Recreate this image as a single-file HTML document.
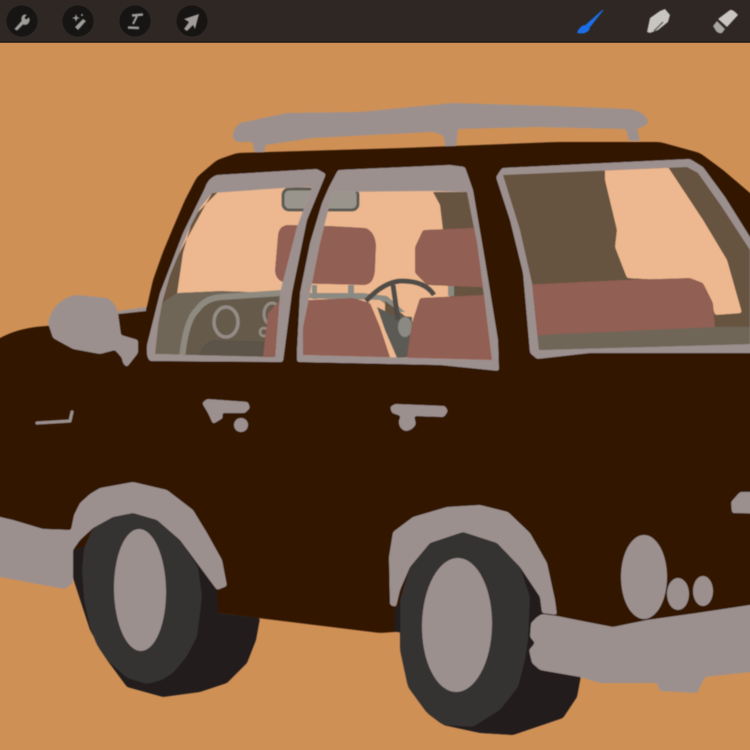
<!DOCTYPE html>
<html><head><meta charset="utf-8"><style>
html,body{margin:0;padding:0;background:#CF9056;width:750px;height:750px;overflow:hidden}
svg{display:block}
</style></head><body>
<svg width="750" height="750" viewBox="0 0 750 750" xmlns="http://www.w3.org/2000/svg">
<defs>
<filter id="s" filterUnits="userSpaceOnUse" x="-60" y="-60" width="870" height="870"><feGaussianBlur stdDeviation="0.6"/></filter>
<filter id="r" filterUnits="userSpaceOnUse" x="-60" y="-60" width="870" height="870" color-interpolation-filters="sRGB"><feGaussianBlur stdDeviation="2.6"/><feColorMatrix type="matrix" values="1 0 0 0 0 0 1 0 0 0 0 0 1 0 0 0 0 0 12 -5.5"/></filter>
<filter id="t" filterUnits="userSpaceOnUse" x="-60" y="-60" width="870" height="870" color-interpolation-filters="sRGB"><feGaussianBlur stdDeviation="1.3"/><feColorMatrix type="matrix" values="1 0 0 0 0 0 1 0 0 0 0 0 1 0 0 0 0 0 10 -4.5"/></filter>
<clipPath id="c1"><path d="M212,193 L283,188 L312,187 L297,227 L280,293 L275,357 L155,354 L158,325 L162,303 L170,275 L190,227 L200,208 Z"/></clipPath>
<clipPath id="c2"><path d="M333,192 L430,191 L467,192 L477,243 L485,303 L492,360 L303,355 L303,327 L310,293 L320,243 L330,203 Z"/></clipPath>
<clipPath id="c3"><path d="M503,175 L687,167 L698,173 L722,207 L750,250 L750,344 L539,350 L532,283 L520,230 Z"/></clipPath>
</defs>
<rect width="750" height="750" fill="#CF9056"/>
<g filter="url(#s)" stroke-linejoin="round">
<!-- rack -->
<path filter="url(#t)" fill="#9C908E" d="M233,133 Q236,126 240,123 L287,113 L360,112 L453,103 L553,106 L630,109 Q646,112 648,122 Q647,127 637,128 L640,141 L629,141 L626,129 L537,127 L458,129 L456,147 L445,147 L444,137 Q438,132 430,132 L313,138 L265,145 L265,152 L254,152 L253,142 L237,142 Q232,140 233,133 Z"/>
<!-- body -->
<path filter="url(#r)" fill="#331800" d="M-30,352 L0,338 Q20,327 48,326 L118,313 L146,311 L153,280 L163,252 L173,228 L185,200 L197,177 L217,160 L237,153 L403,148 L557,142 L660,142 L700,153 L723,170 L750,193 L780,220 L780,620 L555,630 L540,620 L394,632 L380,633 L218,613 L100,590 L60,565 L-30,550 Z"/>
<path fill="#9C908E" d="M118,311 L146,307 L146,311 L118,314 Z"/>
<!-- rear tyre dark -->
<path filter="url(#t)" fill="#211E1B" d="M73,550 L73,578 L90,630 L107,660 L127,687 L163,697 L200,692 L227,683 L247,663 L256,640 L260,618 L218,613 L217,590 L190,550 L133,530 Z"/>
<path filter="url(#r)" fill="#353130" d="M133,513 L113,517 L93,528 L84,548 L82,570 L84,600 L90,627 L97,645 L107,660 L127,678 L147,684 L162,680 L173,673 L187,656 L197,637 L202,597 L198,567 L180,540 L157,520 Z"/>
<ellipse cx="140" cy="590" rx="26" ry="61" fill="#9C908E" transform="rotate(-1 140 590)"/>
<path filter="url(#t)" fill="#9C908E" d="M-30,510 L0,517 L13,520 L43,529 L71,530 L74,515 L80,503 L90,494 L100,488 L133,482 L167,490 L193,510 L207,533 L222,560 L227,586 L217,590 L200,567 L180,540 L157,520 L133,513 L113,517 L93,528 L80,540 L73,550 L73,583 L65,589 L43,585 L0,577 L-30,570 Z"/>
<!-- front tyre -->
<path filter="url(#t)" fill="#211E1B" d="M395,607 L394,632 L400,632 L443,725 L480,733 L513,735 L563,718 L577,697 L582,670 L542,613 L540,597 L520,567 Z"/>
<path filter="url(#r)" fill="#353130" d="M463,532 L430,543 L410,567 L400,600 L400,650 L408,687 L427,713 L443,725 L473,727 L500,710 L518,687 L525,660 L528,640 L530,597 L520,567 L497,543 Z"/>
<ellipse cx="457" cy="625" rx="35" ry="67" fill="#9C908E" transform="rotate(1 457 625)"/>
<path filter="url(#t)" fill="#9C908E" d="M390,605 L389,557 L393,532 L413,517 L447,507 L480,505 L508,512 L530,533 L547,563 L555,600 L557,615 L542,613 L540,597 L520,567 L497,543 L463,532 L430,543 L410,567 L400,590 L396,607 Z"/>
<path filter="url(#t)" fill="#9C908E" d="M542,614 L537,617 L531,623 L530,637 L535,643 L529,650 L532,663 L540,670 L580,677 L600,683 L657,683 L660,691 L697,693 L705,677 L750,672 L780,670 L780,600 L750,605 L697,613 L647,620 L613,627 L587,622 L557,616 Z"/>
<ellipse cx="644" cy="577" rx="23" ry="42" fill="#9C908E"/>
<ellipse cx="678" cy="594" rx="11" ry="16" fill="#9C908E"/>
<ellipse cx="703" cy="591" rx="10" ry="15" fill="#9C908E"/>
<path filter="url(#t)" fill="#9C908E" d="M731,502 L740,492 L780,492 L780,514 L732,513 Z"/>
<!-- side mirror -->
<path filter="url(#t)" fill="#9C908E" d="M48,323 Q50,312 57,305 Q66,296 77,295 L107,298 Q116,303 118,313 L121,335 L138,340 L138,353 L127,367 Q122,364 122,358 L115,350 L100,354 L73,349 L53,338 Z"/>
<!-- handles -->
<path fill="none" stroke="#9C908E" stroke-width="3" stroke-linecap="round" d="M37,423 L70,421 L72,412"/>
<path filter="url(#t)" fill="#9C908E" d="M202,403 L207,399 L248,402 L250,408 L245,413 L222,413 L223,418 L213,424 L208,413 Z"/>
<circle cx="241" cy="425" r="7" fill="#9C908E"/>
<path filter="url(#t)" fill="#9C908E" d="M390,407 L395,404 L445,406 L448,411 L444,417 L414,416 L416,424 Q412,431 405,431 Q398,428 399,420 L401,416 L392,413 Z"/>
<!-- window 1 -->
<path filter="url(#t)" fill="#9C908E" d="M205,188 Q208,178 217,175 L317,169 L326,174 L307,220 L292,293 L283,362 L150,361 Q146,358 147,345 L160,293 L183,233 Z"/>
<g clip-path="url(#c1)">
<rect x="140" y="170" width="200" height="200" fill="#EDB88F"/>
<path fill="#66533F" d="M212,193 L218,192 L193,217 L183,253 L177,294 L160,305 L170,270 Z"/>
<path filter="url(#t)" fill="#6F6658" d="M162,303 L177,293 L220,291 L282,293 L290,370 L140,370 Z"/>
<path fill="#665A4C" d="M182,356 L195,312 L218,298 L282,295 L282,360 Z"/>
<path filter="url(#t)" fill="#5C534A" d="M204,345 L212,340 L282,342 L282,360 L196,360 Z"/>
<path fill="none" stroke="#8F8A80" stroke-width="6" d="M182,358 Q186,320 197,310 Q205,298 222,297 L282,293"/>
<ellipse cx="226" cy="322" rx="12" ry="15" fill="none" stroke="#948D85" stroke-width="3.5"/>
<ellipse cx="272" cy="314" rx="8" ry="11" fill="none" stroke="#948D85" stroke-width="3"/>
<ellipse cx="264" cy="332" rx="4" ry="4" fill="none" stroke="#948D85" stroke-width="2.5"/>
<path fill="#915E52" d="M282,298 L268,313 L263,357 L285,360 L290,298 Z"/>
<path filter="url(#t)" fill="#915E52" d="M287,225 L330,226 L366,228 Q375,232 376,245 L375,270 Q374,284 365,285 L285,283 Q275,280 275,270 L278,235 Q279,226 287,225 Z"/>
<rect x="283" y="189" width="75" height="21" rx="6" fill="#9A958C" stroke="#5C5A55" stroke-width="3"/>
</g>
<!-- window 2 -->
<path filter="url(#t)" fill="#9C908E" d="M329,187 L338,170 L450,165 L465,167 L473,190 L485,260 L498,340 L499,371 L440,365 L297,362 L297,350 L300,293 L310,243 L322,203 Z"/>
<g clip-path="url(#c2)">
<rect x="295" y="185" width="205" height="185" fill="#EDB88F"/>
<path fill="#66533F" d="M433,192 L470,192 L490,300 L450,297 L443,230 L440,205 Z"/>
<rect x="283" y="189" width="75" height="21" rx="6" fill="#9A958C" stroke="#5C5A55" stroke-width="3"/>
<path filter="url(#t)" fill="#915E52" d="M287,225 L330,226 L366,228 Q375,232 376,245 L375,270 Q374,284 365,285 L285,283 Q275,280 275,270 L278,235 Q279,226 287,225 Z"/>
<path filter="url(#t)" fill="#915E52" d="M415,247 L423,230 L473,228 L500,228 L500,288 L427,285 L415,273 Z"/>
<rect x="312" y="285" width="5" height="14" fill="#8A8A82"/>
<rect x="348" y="285" width="6" height="14" fill="#8A8A82"/>
<rect x="448" y="286" width="6" height="10" fill="#8A8A82"/>
<path fill="#8A8A82" d="M300,293 L363,293 L387,296 L405,312 L395,312 L380,300 L300,298 Z"/>
<path fill="#66533F" d="M385,301 L400,312 L412,322 L405,340 L385,320 Z"/>
<path fill="#5C5A55" d="M377,307 L393,315 L412,317 L412,357 L397,358 L385,330 Z"/>
<path fill="none" stroke="#4F4C47" stroke-width="5" d="M366,301 Q385,281 402,281 Q425,281 434,295 M393,285 L398,320"/>
<ellipse cx="405" cy="327" rx="7" ry="10" fill="#8A8A82"/>
<path filter="url(#t)" fill="#915E52" d="M310,300 L353,298 L370,303 L380,327 L390,357 L390,372 L295,372 L295,300 Z"/>
<path filter="url(#t)" fill="#915E52" d="M420,298 L483,295 L505,295 L505,372 L405,372 L407,357 L412,323 Z"/>
</g>
<!-- window 3 -->
<path filter="url(#t)" fill="#9C908E" d="M496,177 L502,168 L690,159 L703,167 L725,197 L750,237 L780,280 L780,352 L750,353 L590,353 L537,359 L530,353 L523,273 L510,220 Z"/>
<g clip-path="url(#c3)">
<rect x="495" y="160" width="255" height="200" fill="#66533F"/>
<path filter="url(#t)" fill="#EDB88F" d="M605,169 L605,160 L665,160 L668,167 L703,220 L727,260 L742,313 L715,315 L710,297 L697,282 L627,278 L615,247 L617,230 L605,180 Z"/>
<path filter="url(#t)" fill="#915E52" d="M520,285 L623,280 L690,278 L703,283 L713,303 L715,327 L715,335 L520,340 Z"/>
<path fill="#6F6658" d="M539,335 L715,327 L750,327 L750,350 L535,352 Z"/>
</g>
</g>
<!-- toolbar -->
<rect width="750" height="42" fill="#2E2723"/>
<rect y="41" width="750" height="2" fill="#231C18" opacity=".8"/>
<circle cx="22" cy="21" r="15.5" fill="#171514"/>
<circle cx="78" cy="21" r="15.5" fill="#171514"/>
<circle cx="135" cy="21" r="15.5" fill="#171514"/>
<circle cx="192" cy="21" r="15.5" fill="#171514"/>
<g fill="#9F9C99" stroke="none" filter="url(#s)">
<path d="M15,29 L22,21 Q21,17 24,15 L26,15 L24,18 L26,20 L29,18 Q30,22 27,24 Q25,25 23,24 L17,30 Z" stroke="#9F9C99" stroke-width=".8"/>
<path d="M75,27 L83,19 L86,21 L78,30 Z"/>
<path d="M76,14 L77,17 L80,18 L77,19 L76,22 L75,19 L72,18 L75,17 Z"/>
<circle cx="82" cy="15" r="1"/>
<path d="M132,15.5 L143,14.5" fill="none" stroke="#9F9C99" stroke-width="2.6"/>
<path d="M137,16 L133,24" fill="none" stroke="#9F9C99" stroke-width="2"/>
<path d="M128,27.5 L139,28" fill="none" stroke="#9F9C99" stroke-width="2.6"/>
<path d="M199,14 L184,19 L189,22 L184,29 L187,31 L193,25 L195,29 Z"/>
<path fill="#1A6EE8" d="M603,10 L585,26 L588,29 Z" stroke="#1A6EE8" stroke-width="1"/>
<path fill="#1A6EE8" d="M584,25 Q579,27 577,33 Q586,35 590,29 Z"/>
<path fill="#C9C5C2" d="M647,32 L650,18 L660,11 L665,9 L670,15 L668,22 L658,30 L650,33 Z"/>
<path stroke="#2E2723" stroke-width="1.2" fill="none" d="M654,31 L663,22"/>
<path fill="#C9C5C2" d="M718,19 L730,10 Q733,9 738,15 L727,27 Z"/>
<path fill="#A8A5A2" d="M713,26 L717,21 L725,29 L722,33 Q719,34 716,31 Z"/>
</g>
</svg>
</body></html>
